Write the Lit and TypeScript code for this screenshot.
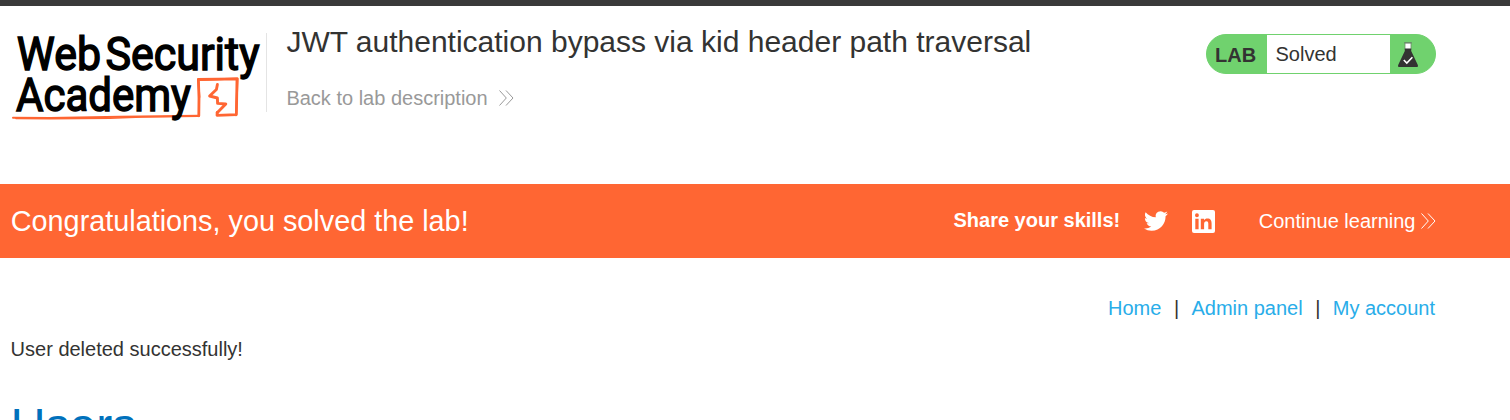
import { LitElement, html, css, svg } from "lit";
import { customElement } from "lit/decorators.js";

const chevrons = html`<svg class="chev" viewBox="0 0 15 16" width="15" height="16">
  <path d="M0.5 0.5 L7.3 8 L0.5 15.5 M7 0.5 L14 8 L7 15.5" fill="none" stroke="currentColor" stroke-width="1" />
</svg>`;

@customElement("academy-logo")
class AcademyLogo extends LitElement {
  static styles = css`
    :host { display: block; width: 256px; height: 98px; }
    svg { display: block; overflow: visible; }
    text { font-family: Roboto, "Liberation Sans", sans-serif; font-weight: 400; font-size: 46.5px; fill: #000; stroke: #000; stroke-width: 1.5px; }
    .ink { fill: none; stroke: #ff6633; stroke-linejoin: round; stroke-linecap: round; }
  `;
  render() {
    return html`<svg width="256" height="98" viewBox="10 28 256 98">
      ${svg`
        <path class="ink" stroke-width="2" d="M13 117.8 L50 118 L120 116.8 L199 115.8" />
        <path class="ink" stroke-width="1.6" d="M16 118.5 L50 118.6 L110 118.2 L142 117 L198 116.3" />
        <path class="ink" stroke-width="2.8" d="M198.8 115.8 L199 98 L198.4 79.5 L237 78.8 L236.4 114.6 L217 115.3 L217.2 112.5" />
        <path class="ink" stroke-width="2" d="M198 80 L237.6 78.6 L236 115.3 M198.2 79 L199.4 97" />
        <path class="ink" stroke-width="2.9" d="M217.4 84.5 L216.4 89.5 L209.6 96 L217.4 98 L217.6 103.4 L225.8 104 L217.2 112.8" />
        <text x="16.8" y="69.5" textLength="84.2" lengthAdjust="spacingAndGlyphs">Web</text>
        <text x="105.5" y="69.5" textLength="154" lengthAdjust="spacingAndGlyphs">Security</text>
        <text x="16" y="110.5" textLength="175" lengthAdjust="spacingAndGlyphs">Academy</text>
      `}
    </svg>`;
  }
}

@customElement("lab-status")
class LabStatus extends LitElement {
  static styles = css`
    :host { display: block; }
    .pill {
      display: flex; box-sizing: border-box; width: 230px; height: 40px;
      border: 1px solid #70d26e; border-radius: 20px; overflow: hidden; background: #70d26e; line-height: 40px;
    }
    .tag { width: 60px; box-sizing: border-box; padding-left: 8px; font-weight: 700; }
    .state { width: 123px; box-sizing: border-box; padding-left: 8.5px; background: #fff; line-height: 39px; }
    .flask { display: block; margin: 7px 0 0 7px; }
  `;
  render() {
    return html`<div class="pill">
      <span class="tag">LAB</span><span class="state">Solved</span>
      <svg class="flask" width="22" height="26" viewBox="0 0 22 26">
        <path d="M8 1 V8 H14 V1 Z" fill="#fff" stroke="#6c8a6b" stroke-width="0.8" />
        <path d="M7 0.8 H15" stroke="#667a65" stroke-width="0.9" />
        <path d="M7.8 6.5 H14.2 V9 L20.6 22.5 Q21.6 25 20 25 H2 Q0.4 25 1.4 22.5 L7.8 9 Z" fill="#333332" />
        <path d="M6.8 18 L9.8 21 L15.4 15.2" fill="none" stroke="#fff" stroke-width="1.6" />
      </svg>
    </div>`;
  }
}

@customElement("app-root")
class AppRoot extends LitElement {
  static styles = css`
    :host {
      display: block; height: 420px; overflow: hidden; background: #fff; color: #333332;
      font: 20px/24px "Liberation Sans", Arial, sans-serif;
    }
    .top { height: 6px; background: #3a3a3a; }
    .header { display: flex; height: 178px; padding: 22px 74px 0 10px; box-sizing: border-box; align-items: flex-start; }
    .titles { margin: 5px 0 0 0; height: 79px; padding-left: 19.4px; border-left: 1px solid #e4e4e4; box-sizing: border-box; flex: 1; }
    h2 { margin: -9px 0 0; font-size: 30px; line-height: 36px; font-weight: 400; white-space: nowrap; }
    .back { display: flex; align-items: center; gap: 11px; margin-top: 26px; color: #999; }
    .chev { display: block; flex: none; }
    lab-status { margin-top: 6px; }
    .banner { display: flex; align-items: center; height: 74px; padding: 0 74px 0 10.8px; background: #ff6633; color: #fff; box-sizing: border-box; }
    .congrats { flex: 1; font-size: 28.8px; }
    .share { font-weight: 700; margin: 0 23.5px 2px 0; }
    .icon { display: block; }
    .linkedin { margin: 0 44px 0 24px; }
    .continue { display: flex; align-items: center; gap: 5.5px; }
    .nav { display: flex; justify-content: flex-end; padding: 38px 75px 0 0; color: #29ade9; }
    .bar { color: #333332; margin: 0 12.2px 0 12.7px; }
    .message { margin: 17px 0 0; padding-left: 10.6px; }
    h1 { margin: 38px 0 0; padding-left: 10.8px; font-size: 48px; line-height: 54px; font-weight: 400; color: #0071bc; }
  `;
  render() {
    return html`
      <div class="top"></div>
      <header class="header">
        <academy-logo></academy-logo>
        <div class="titles">
          <h2>JWT authentication bypass via kid header path traversal</h2>
          <div class="back"><span>Back to lab description</span>${chevrons}</div>
        </div>
        <lab-status></lab-status>
      </header>
      <section class="banner">
        <div class="congrats">Congratulations, you solved the lab!</div>
        <span class="share">Share your skills!</span>
        <svg class="icon" width="24" height="24" viewBox="0 0 24 24">
          <path fill="#fff" d="M23.95 4.57a10 10 0 0 1-2.82.77 4.96 4.96 0 0 0 2.16-2.72c-.95.55-2 .95-3.13 1.18a4.92 4.92 0 0 0-8.38 4.48C7.69 8.1 4.07 6.13 1.64 3.16a4.82 4.82 0 0 0-.67 2.48c0 1.71.87 3.21 2.19 4.1a4.9 4.9 0 0 1-2.23-.62v.06a4.92 4.92 0 0 0 3.95 4.83 5 5 0 0 1-2.21.08 4.94 4.94 0 0 0 4.6 3.42A9.87 9.87 0 0 1 0 19.54a13.99 13.99 0 0 0 7.55 2.21c9.05 0 14-7.5 14-13.98 0-.21 0-.42-.02-.63a9.94 9.94 0 0 0 2.46-2.55z" />
        </svg>
        <svg class="icon linkedin" width="23" height="23" viewBox="0 0 23 23">
          <rect width="23" height="23" rx="2" fill="#fff" />
          <path fill="#ff6633" d="M3.3 8.7H6.6V19.3H3.3Z M3 5.2a1.95 1.95 0 1 1 3.9 0a1.95 1.95 0 1 1-3.9 0 M8.8 8.7H12V10.2C12.7 9 13.9 8.4 15.3 8.4C18.7 8.4 19.6 10.5 19.6 13.4V19.3H16.3V14.1C16.3 12.4 16 11.3 14.5 11.3C12.7 11.3 12.1 12.5 12.1 14V19.3H8.8Z" />
        </svg>
        <div class="continue"><span>Continue learning</span>${chevrons}</div>
      </section>
      <nav class="nav"><span>Home</span><span class="bar">|</span><span>Admin panel</span><span class="bar">|</span><span>My account</span></nav>
      <p class="message">User deleted successfully!</p>
      <h1>Users</h1>
    `;
  }
}
